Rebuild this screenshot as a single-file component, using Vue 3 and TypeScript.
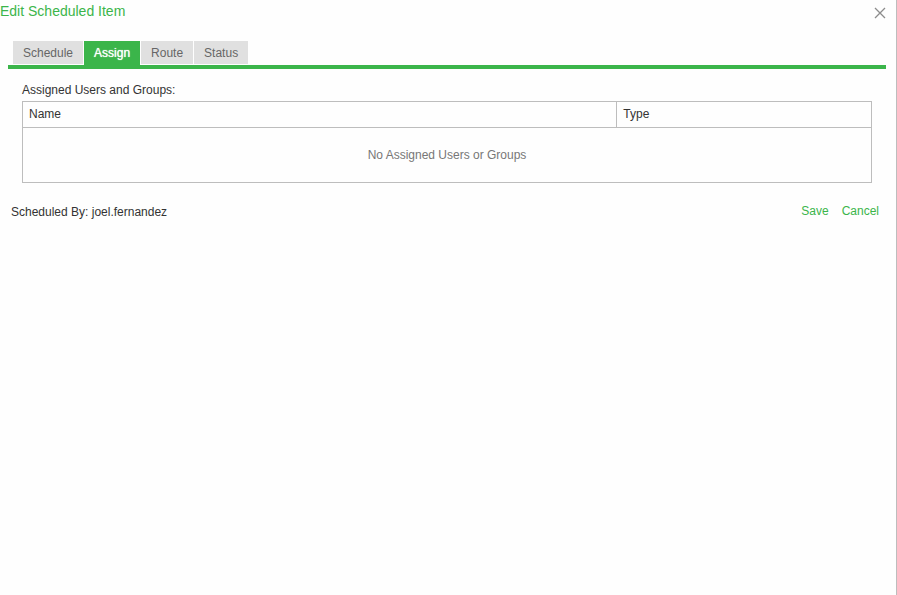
<script setup lang="ts">
import { ref } from 'vue'

interface Assignee {
  name: string
  type: string
}

const tabs: string[] = ['Schedule', 'Assign', 'Route', 'Status']
const activeTab = ref<string>('Assign')
const assignees = ref<Assignee[]>([])
const scheduledBy = ref<string>('joel.fernandez')
</script>

<template>
  <main class="dialog">
    <header class="header">
      <h1 class="title">Edit Scheduled Item</h1>
      <button type="button" class="close" aria-label="Close">
        <svg width="12" height="12" viewBox="0 0 12 12" aria-hidden="true">
          <path d="M1 1L11 11M11 1L1 11" fill="none" stroke="#8c8c8c" stroke-width="1.3" />
        </svg>
      </button>
    </header>

    <nav class="tabs" role="tablist">
      <button
        v-for="tab in tabs"
        :key="tab"
        type="button"
        role="tab"
        class="tab"
        :class="{ active: tab === activeTab }"
        :aria-selected="tab === activeTab"
        @click="activeTab = tab"
      >{{ tab }}</button>
    </nav>

    <section class="panel">
      <table class="assignees">
        <caption>Assigned Users and Groups:</caption>
        <thead>
          <tr>
            <th scope="col" class="name">Name</th>
            <th scope="col">Type</th>
          </tr>
        </thead>
        <tbody>
          <tr v-for="a in assignees" :key="a.name">
            <td>{{ a.name }}</td>
            <td>{{ a.type }}</td>
          </tr>
          <tr v-if="assignees.length === 0">
            <td colspan="2" class="empty">No Assigned Users or Groups</td>
          </tr>
        </tbody>
      </table>
    </section>

    <footer class="footer">
      <span class="author">Scheduled By: {{ scheduledBy }}</span>
      <div class="actions">
        <button type="button" class="action">Save</button>
        <button type="button" class="action">Cancel</button>
      </div>
    </footer>
  </main>
</template>

<style>
body {
  background: #fefefe;
}
</style>

<style scoped>
.dialog {
  box-sizing: border-box;
  min-height: 100vh;
  border-right: 1px solid #bdbdbd;
  font: 12px/16px "Liberation Sans", Arial, sans-serif;
  color: #333;
}

button {
  margin: 0;
  padding: 0;
  border: 0;
  background: none;
  font: inherit;
  cursor: pointer;
}

.header {
  display: flex;
  justify-content: space-between;
  align-items: flex-start;
  height: 41px;
  padding-right: 10px;
}

.title {
  margin: 0;
  padding-top: 2px;
  font-size: 14px;
  line-height: 18px;
  font-weight: 400;
  color: #3bb54a;
}

.close {
  display: flex;
  padding-top: 7px;
}

.tabs {
  display: flex;
  align-items: flex-start;
  gap: 1px;
  margin: 0 10px 0 8px;
  padding-left: 5px;
  border-bottom: 4px solid #3bb54a;
}

.tab {
  height: 23px;
  margin-bottom: 1px;
  padding: 0 10px;
  line-height: 24px;
  background: #e0e0e0;
  color: #666;
}

/* A shadow thickens the label without changing the tab's width. */
.tab.active {
  height: 24px;
  margin-bottom: 0;
  background: #3bb54a;
  color: #fff;
  text-shadow: 0 0 1px #fff;
}

.panel {
  padding: 13px 24px 0 22px;
}

.assignees {
  width: 100%;
  border-collapse: collapse;
  table-layout: fixed;
}

.assignees caption {
  padding-bottom: 3px;
  text-align: left;
}

.assignees th,
.assignees td {
  box-sizing: border-box;
  height: 26px;
  padding: 0 6px 2px;
  border: 1px solid #bdbdbd;
  text-align: left;
  font-weight: 400;
}

.assignees .name {
  width: 70%;
}

.assignees .empty {
  height: 55px;
  padding: 0;
  text-align: center;
  color: #777;
}

.footer {
  display: flex;
  justify-content: space-between;
  align-items: flex-start;
  padding: 20px 17px 0 11px;
}

.author {
  padding-top: 1px;
}

.actions {
  display: flex;
  gap: 13px;
}

.action {
  color: #3bb54a;
}
</style>
